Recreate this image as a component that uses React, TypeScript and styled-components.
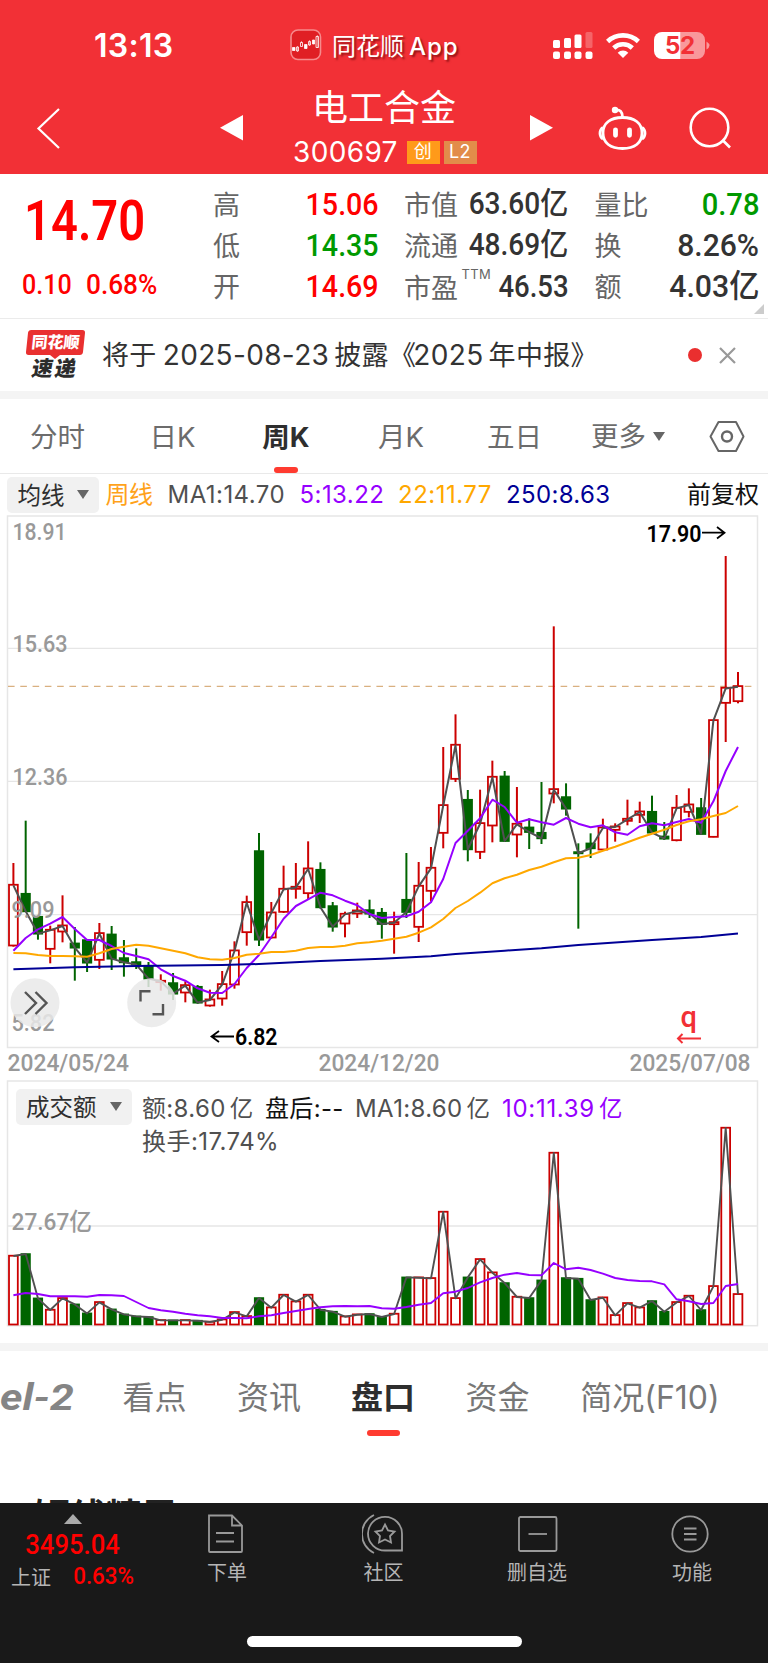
import React from "react";
import styled, { createGlobalStyle } from "styled-components";

const RED = "#f23036";
const UP = "#cc0000";
const DOWN = "#006400";

const Global = createGlobalStyle`
  * { box-sizing: border-box; }
  body { margin: 0; background: #fff; font-family: Inter, "Noto Sans CJK SC", sans-serif; color: #333; }
`;

const Page = styled.div`
  width: 768px; height: 1663px; overflow: hidden; display: flex; flex-direction: column; background: #fff;
`;

/* Condensed figures used for prices */
const Num = styled.span<{ $size?: number; $color?: string; $origin?: string; $x?: number; $w?: number; $drop?: number }>`
  display: inline-block; white-space: nowrap;
  font-family: Roboto, "Noto Sans CJK SC", sans-serif;
  font-weight: ${(p) => p.$w ?? 500};
  font-size: ${(p) => p.$size ?? 32}px; line-height: 1;
  color: ${(p) => p.$color ?? "#333"};
  padding-top: ${(p) => p.$drop ?? 0}px;
  transform: scaleX(${(p) => p.$x ?? 0.86});
  transform-origin: ${(p) => p.$origin ?? "right"} center;
`;

const Header = styled.header`
  height: 174px; flex: none; background: ${RED}; color: #fff; display: flex; flex-direction: column;
`;
const StatusBar = styled.div`
  height: 84px; padding: 6px 56px 0 94px; display: flex; align-items: center;
`;
const Clock = styled.div`font-size: 32px; font-weight: 600; letter-spacing: 0.3px; width: 196px; flex: none; padding-top: 1px;`;
const AppName = styled.div`
  font-size: 24px; margin-left: 10px; width: 220px; flex: none; white-space: nowrap; margin-top: -1px;
  text-shadow: 2px 2px 2px rgba(90, 0, 0, 0.6);
  span { margin-left: 5px; font-weight: 500; letter-spacing: 1px; }
`;
const NavBar = styled.div`height: 90px; display: grid; grid-template-columns: 200px 90px 194px 93px 77px 114px;`;
const Cell = styled.div`display: flex; svg { display: block; }`;
const TitleBox = styled.div`display: flex; flex-direction: column; align-items: center;`;
const Title = styled.div`
  font-size: 36px; line-height: 46px; margin-top: 1px; margin-left: -6px; font-weight: 400; white-space: nowrap;
`;
const CodeRow = styled.div`display: flex; align-items: center; align-self: flex-start; padding-left: 3px; height: 29px; margin-top: 6px;`;
const Code = styled.span`font-size: 28px; letter-spacing: 0.35px; width: 113.5px; white-space: nowrap;`;
const Tag = styled.span<{ $bg: string }>`
  width: 33px; height: 23px; margin-right: 4px; margin-top: 1px; background: ${(p) => p.$bg};
  font-size: 18px; line-height: 22px; text-align: center; letter-spacing: 0.5px;
`;

const Quote = styled.section`
  height: 145px; flex: none; border-bottom: 1.5px solid #ebebeb; display: grid;
  grid-template-columns: 213px 165.5px 164.5px 165px; column-gap: 0; position: relative;
`;
const PriceBox = styled.div`display: flex; flex-direction: column; padding-left: 22px;`;
const Price = styled.div`height: 84px; padding: 20px 0 0 1.5px;`;
const Change = styled.div`height: 34px; display: flex; padding-top: 13px;`;
const ChangeItem = styled.div`width: 64px;`;
const Stats = styled.div<{ $shift: number }>`
  display: flex; flex-direction: column; padding-top: 9px; margin: 0 ${(p) => -p.$shift}px 0 ${(p) => p.$shift}px;
`;
const Stat = styled.div`
  height: 41px; display: flex; justify-content: space-between; align-items: center; position: relative; white-space: nowrap;
`;
const StatLabel = styled.span<{ $low: boolean }>`
  font-size: 27px; color: #666; line-height: 38px; padding-top: ${(p) => (p.$low ? 7 : 4)}px;
  sup { font-size: 13px; position: absolute; top: -1px; left: 57.5px; line-height: 20px; letter-spacing: .4px; }
`;
const Corner = styled.i`
  position: absolute; right: 4px; bottom: 4px; border-left: 10px solid transparent; border-bottom: 10px solid #ccc;
`;

const News = styled.section`height: 72px; flex: none; display: flex; align-items: center; padding: 0 32px 0 24px;`;
const NewsLogo = styled.div`width: 62px; height: 50px; flex: none; display: flex; flex-direction: column; align-items: center;`;
const LogoTop = styled.div`
  width: 57px; height: 25px; background: #e93030; border-radius: 3px; transform: skewX(-6deg); color: #fff;
  font-size: 16px; font-weight: 900; line-height: 24px; text-align: center; white-space: nowrap;
`;
const LogoTip = styled.i`border: 5px solid transparent; border-bottom: 0; border-top: 4px solid #e93030;`;
const LogoBottom = styled.div`
  font-size: 21px; line-height: 20px; font-weight: 900; transform: skewX(-10deg); letter-spacing: 2px;
  white-space: nowrap; margin-top: 0; color: #2c2c2c;
`;
const NewsText = styled.div`
  font-size: 27px; letter-spacing: 0.35px; margin-left: 16px; width: 586px; flex: none; white-space: nowrap; margin-top: -4px;
`;
const Latin = styled.span<{ $tight?: boolean }>`
  font-size: 28px; letter-spacing: 0.35px; margin: 0 5px 0 ${(p) => (p.$tight ? -3 : 6)}px;
`;
const Dot = styled.i`width: 14px; height: 14px; border-radius: 50%; background: #ea2f2f; margin-right: 16.5px; flex: none;`;

const Gap = styled.div`height: 8px; flex: none; background: #f4f4f4;`;

const Tabs = styled.nav`
  height: 75px; flex: none; border-bottom: 1.5px solid #e9e9e9; display: grid; color: #6c6c6c; font-size: 27.5px;
  grid-template-columns: 115px 115px 112px 118px 109px 121px 78px;
`;
const Tab = styled.div<{ $on?: boolean }>`
  display: flex; flex-direction: column; align-items: center; white-space: nowrap; line-height: 76px; height: 75px;
  font-weight: ${(p) => (p.$on ? 700 : 400)}; color: ${(p) => (p.$on ? "#2e2e2e" : "inherit")};
`;
const Underline = styled.i<{ $w: number }>`
  width: ${(p) => p.$w}px; height: 6px; flex: none; border-radius: 3px; background: #ff3b30; margin-top: -8px;
`;
const MoreTab = styled.div`display: flex; align-items: center; line-height: 74px; height: 74px; padding-left: 22px; gap: 7px;`;
const Caret = styled.i`
  border-left: 6.5px solid transparent; border-right: 6.5px solid transparent; border-top: 9px solid #666;
`;

const Legend = styled.div`
  height: 41px; flex: none; display: flex; align-items: center; padding-left: 7px; font-size: 24px; white-space: nowrap;
`;
const Pill = styled.div<{ $w: number }>`
  width: ${(p) => p.$w}px; height: 36px; border-radius: 5px; background: #f1f1f1; flex: none; color: #2f2f2f;
  display: flex; align-items: center; justify-content: space-between; padding: 0 10px 1px 10.5px; font-size: 23.5px;
`;
const Entry = styled.span<{ $c: string; $w?: number; $ls?: number; $start?: number }>`
  color: ${(p) => p.$c}; width: ${(p) => p.$w ?? 100}px; flex: none; letter-spacing: ${(p) => p.$ls ?? 0.35}px; line-height: 33px;
  margin-left: ${(p) => p.$start ?? 0}px;
  small { font-size: 23.5px; margin-left: 4px; }
`;

const Chart = styled.svg`display: block; flex: none;`;
const VolumePanel = styled.section`position: relative; height: 268px; flex: none;`;
const VolumeLegend = styled.div`
  position: absolute; left: 15.5px; top: 13.5px; display: flex; align-items: flex-start; font-size: 24px;
`;
const Entries = styled.div`display: flex; flex-wrap: wrap; width: 600px; padding: 3.5px 0 0 10.5px; white-space: nowrap;`;

const InfoTabs = styled.nav`
  height: 114px; flex: none; display: grid; font-size: 32px; color: #777; padding-top: 8px;
  grid-template-columns: 97px 115px 114px 114px 115px 190px;
`;
const InfoTab = styled.div<{ $on?: boolean }>`
  display: flex; flex-direction: column; align-items: center; line-height: 78px; height: 78px; white-space: nowrap;
  font-weight: ${(p) => (p.$on ? 700 : 400)}; color: ${(p) => (p.$on ? "#2e2e2e" : "inherit")};
`;
const InfoLine = styled(Underline)`margin-top: -7.5px;`;
const LevelTab = styled.div`
  font-family: Roboto, sans-serif; font-weight: 700; font-style: italic; font-size: 37px; line-height: 78px;
  color: #858585; white-space: nowrap; transform: scaleX(1.16); transform-origin: left center;
`;
const Section = styled.section`height: 38px; flex: none; overflow: hidden; padding: 33px 34px 0;`;
const SectionTitle = styled.div`font-size: 36px; font-weight: 700; line-height: 38px; color: #222;`;

const BottomBar = styled.footer`
  height: 160px; flex: none; background: #191919; color: #b5b5b5; display: flex; flex-direction: column; font-size: 20px;
`;
const Actions = styled.div`height: 132px; display: grid; grid-template-columns: 149px 156px 157px 150px 160px;`;
const Index = styled.div`display: flex; flex-direction: column; align-items: center; padding: 11px 4px 0 0;`;
const UpMark = styled.i`
  border-left: 9px solid transparent; border-right: 9px solid transparent; border-bottom: 10px solid #aaa; margin-bottom: 7px;
`;
const IndexRow = styled.div`display: flex; align-items: center; height: 30px; margin-top: 2px; width: 123px; justify-content: space-between;`;
const Action = styled.div`
  display: flex; flex-direction: column; align-items: center; line-height: 30px; padding-top: 9px; white-space: nowrap;
  svg { display: block; margin-bottom: 2px; }
`;
const HomeLine = styled.i`width: 275px; height: 11px; border-radius: 6px; background: #fff; align-self: center; margin-top: 1px;`;

/* [direction, high, bodyTop, bodyBottom, low] in chart pixels */
type Candle = [1 | 0, number, number, number, number];
const shift = (base: number, rows: Candle[]): Candle[] =>
  rows.map(([d, ...v]) => [d, ...v.map((n) => base + n / 3)] as Candle);
const candles: Candle[] = [
  ...shift(780, [
    [1, 249, 314, 498, 500], [0, 122, 340, 396, 396], [0, 409, 409, 463, 479], [1, 437, 449, 508, 550],
    [1, 346, 436, 456, 487], [0, 441, 489, 505, 602], [0, 479, 479, 550, 576], [1, 429, 459, 541, 567],
    [0, 438, 462, 538, 570], [0, 480, 533, 549, 590], [0, 505, 545, 556, 567], [0, 546, 556, 598, 621],
    [1, 583, 602, 608, 632], [0, 579, 608, 643, 660], [1, 604, 615, 639, 667], [0, 615, 619, 670, 671],
    [1, 629, 658, 678, 680], [1, 573, 612, 657, 677], [1, 484, 511, 615, 626], [1, 347, 366, 458, 497],
  ]),
  ...shift(690, [
    [0, 429, 482, 751, 768], [1, 636, 667, 744, 746], [1, 527, 596, 667, 669], [1, 519, 590, 598, 626],
    [1, 454, 535, 611, 628], [0, 517, 538, 654, 656], [0, 636, 647, 712, 725], [1, 665, 671, 702, 742],
    [1, 638, 661, 672, 684], [0, 629, 659, 673, 684], [0, 654, 667, 704, 746], [1, 665, 696, 704, 791],
    [0, 489, 628, 668, 684], [1, 516, 587, 712, 756], [1, 471, 533, 604, 635], [1, 171, 345, 430, 475],
    [1, 73, 164, 268, 276], [0, 300, 328, 480, 514], [1, 299, 399, 487, 507], [1, 212, 260, 408, 457],
    [0, 243, 258, 455, 456],
  ]),
  ...shift(640, [
    [1, 441, 551, 585, 652], [0, 535, 561, 578, 627], [0, 426, 577, 597, 612], [1, -41, 447, 462, 490],
    [0, 430, 470, 508, 527], [0, 610, 635, 642, 866], [0, 580, 609, 627, 654], [1, 536, 562, 630, 633],
    [1, 550, 559, 571, 605], [1, 479, 536, 544, 556], [1, 485, 514, 526, 549], [0, 467, 514, 580, 582],
    [0, 546, 588, 598, 600], [1, 465, 503, 602, 604], [1, 445, 493, 517, 532], [0, 474, 503, 584, 585],
    [1, 240, 240, 592, 592], [1, -252, 143, 190, 306], [1, 96, 138, 185, 190],
  ]),
];
const at = (base: number, v: number[]) => v.map((n) => base + n / 3);
const ma5 = [
  ...at(780, [512, 474, 448, 431, 411, 447, 480, 480, 498, 519, 528, 538, 568, 588, 602, 625, 638, 639, 612, 564]),
  ...at(690, [795, 742, 686, 648, 628, 608, 616, 632, 646, 672, 684, 681, 679, 665, 637, 567, 459, 422, 385, 329, 351]),
  ...at(640, [548, 538, 547, 554, 534, 551, 562, 556, 577, 584, 559, 550, 556, 546, 537, 548, 484, 393, 321]),
];
const ma22 = [
  ...at(780, [519, 520, 525, 528, 528, 529, 530, 520, 507, 500, 494, 497, 505, 512, 520, 532, 538, 539, 534, 524]),
  ...at(690, [791, 786, 786, 782, 774, 771, 771, 767, 760, 757, 752, 746, 740, 728, 712, 687, 654, 633, 608, 580, 565]),
  ...at(640, [704, 690, 680, 667, 655, 653, 645, 632, 620, 607, 593, 581, 569, 555, 544, 538, 528, 519, 498]),
];
const ma250: [number, number][] = [
  [0, 969.3], [5, 967.3], [10, 966], [17, 965], [20, 964], [25, 961], [30, 958.7], [34, 956.3], [36, 954],
  [40, 950.7], [43, 948.3], [46, 945], [52, 940], [56, 937], [59, 933.4],
];
const volTops = at(1075, [
  541, 535, 668, 703, 668, 686, 713, 680, 701, 716, 722, 724, 734, 734, 734, 735, 739, 732, 710, 722, 667, 696, 658,
  678, 658, 702, 708, 723, 717, 715, 724, 715, 605, 606, 608, 409, 668, 605, 551, 591, 622, 664, 667, 614, 232, 607,
  609, 673, 666, 719, 683, 696, 676, 708, 680, 661, 703, 632, 157, 656,
]);
const volMa = at(1075, [
  661, 654, 657, 664, 664, 664, 665, 660, 661, 663, 681, 699, 706, 710, 716, 721, 724, 729, 729, 730, 724, 721, 714,
  708, 702, 697, 694, 693, 694, 693, 700, 701, 696, 689, 684, 655, 650, 639, 622, 609, 599, 594, 600, 601, 564, 583,
  578, 585, 596, 609, 615, 618, 619, 628, 673, 679, 687, 684, 633, 627,
]);
const X = (i: number) => 13.4 + 12.281 * i;
const line = (v: number[]) => v.map((y, i) => `${X(i).toFixed(1)},${y.toFixed(1)}`).join(" ");

const Axis = ({ x, y, w, children, fill = "#999", weight = 500, size = 24 }: {
  x: number; y: number; w: number; children: string; fill?: string; weight?: number; size?: number;
}) => (
  <text x={x} y={y} textLength={w} lengthAdjust="spacingAndGlyphs" fill={fill} fontSize={size} fontWeight={weight}
    fontFamily='Roboto, "Noto Sans CJK SC", sans-serif'>{children}</text>
);

const Bar = ({ x, top, bottom, up }: { x: number; top: number; bottom: number; up: boolean }) =>
  up ? (
    <rect x={x - 4.4} y={top + 0.1} width={8.8} height={Math.max(bottom - top - 0.6, 1)} fill="#fff" stroke={UP} strokeWidth={1.8} />
  ) : (
    <rect x={x - 5.1} y={top - 0.4} width={10.2} height={bottom - top + 0.6} fill={DOWN} />
  );

const PriceChart = () => (
  <Chart width="768" height="560" viewBox="0 515 768 560">
    <g stroke="#e6e6e6" fill="none">
      <rect x="7.5" y="516" width="750" height="531.5" strokeWidth="1.5" />
      <path d="M8 648.4H757M8 781.4H757M8 914.6H757" strokeWidth="1.2" />
    </g>
    <path d="M8 686.4H757" stroke="#d9b080" strokeWidth="1.2" strokeDasharray="6.6 5.68" />
    {candles.map(([d, hi, top, bottom, lo], i) => (
      <g key={i}>
        <path d={`M${X(i)} ${hi}V${lo}`} stroke={d ? UP : DOWN} strokeWidth="2" />
        <Bar x={X(i)} top={top} bottom={bottom} up={!!d} />
      </g>
    ))}
    <g fill="none" strokeWidth="2" strokeLinejoin="round">
      <polyline points={line(candles.map((c) => (c[0] ? c[2] + 0.7 : c[3] - 0.7)))} stroke="#505050" />
      <polyline points={line(ma5)} stroke="#9600ff" />
      <polyline points={line(ma22)} stroke="#ffa800" />
      <polyline points={ma250.map(([i, y]) => `${X(i)},${y}`).join(" ")} stroke="#000096" />
    </g>
    <Axis x={12.5} y={539.5} w={54}>18.91</Axis>
    <Axis x={12.5} y={652} w={55}>15.63</Axis>
    <Axis x={12.5} y={785} w={55}>12.36</Axis>
    <Axis x={11.5} y={918} w={43}>9.09</Axis>
    <Axis x={11.5} y={1031} w={43}>5.82</Axis>
    <Axis x={646.5} y={541.5} w={55} fill="#000" weight={600}>17.90</Axis>
    <Axis x={235} y={1045} w={42.5} fill="#000" weight={600}>6.82</Axis>
    <g fill="none" stroke="#000" strokeWidth="1.8">
      <path d="M702 532.7H724M717 527L724.5 532.7L717 538.5" />
      <path d="M234 1036.5H212M219 1031L211.5 1036.5L219 1042" />
    </g>
    <text x="680.5" y="1026.5" fontSize="29" fontFamily="Roboto" fontWeight="500" fill={RED}>q</text>
    <path d="M701 1038.6H678M682.5 1034L678 1038.6L682.5 1043" fill="none" stroke={RED} strokeWidth="2" />
    <g fill="#e9e9e9" fillOpacity="0.85">
      <circle cx="35" cy="1002.7" r="24.5" />
      <circle cx="151.7" cy="1002.7" r="24.5" />
    </g>
    <g fill="none" stroke="#555" strokeWidth="2.4">
      <path d="M25 992L36 1003L25 1014M35.5 992L46.5 1003L35.5 1014" />
      <path d="M140.5 1001.5V991.3H150.5M163 1004V1014.3H152.5" />
    </g>
    <Axis x={7.5} y={1070.5} w={121.5}>2024/05/24</Axis>
    <Axis x={318.5} y={1070.5} w={121}>2024/12/20</Axis>
    <Axis x={629.5} y={1070.5} w={121}>2025/07/08</Axis>
  </Chart>
);

const VolumeChart = () => (
  <Chart width="768" height="268" viewBox="0 1075 768 268">
    <g stroke="#e6e6e6" fill="none">
      <rect x="7.5" y="1081" width="750" height="244.7" strokeWidth="1.5" />
      <path d="M8 1226H757" strokeWidth="1.3" />
    </g>
    {volTops.map((y, i) => <Bar key={i} x={X(i)} top={y + 0.3} bottom={1325} up={!!candles[i][0]} />)}
    <g fill="none" strokeWidth="1.9" strokeLinejoin="round">
      <polyline points={line(volTops.map((y) => y + 0.7))} stroke="#505050" />
      <polyline points={line(volMa)} stroke="#9600ff" />
    </g>
    <Axis x={11.5} y={1229.5} w={80.5}>27.67亿</Axis>
  </Chart>
);

const AppIcon = () => (
  <svg width="32" height="32" viewBox="0 0 32 32">
    <rect x="1" y="1" width="29.5" height="29.5" rx="7" fill="#e01f24" stroke="#f68a8c" strokeWidth="1.6" />
    <g fill="#fff" stroke="#fff" strokeWidth=".8">
      <path d="M2.5 18.5h2.5v3h-2.5zM14.5 15.5h2.5v4h-2.5zM22.5 11h2v4h-2z" />
      <path d="M6.5 18h2v4h-2zM10.5 13.5h2v4h-2zM18.5 12.5h2v3.5h-2zM26 7.5h2.5v11h-2.5z" fill="none" />
      <path d="M7.5 17v6M11.5 12v2M19.5 11v6M27.3 6v13" strokeWidth=".5" />
    </g>
  </svg>
);

const StatusIcons = () => (
  <svg width="160" height="34" viewBox="0 0 160 34">
    <g fill="#fff">
      <rect x="1" y="12" width="7" height="8" rx="1.5" /><rect x="12" y="10" width="7" height="10" rx="1.5" />
      <rect x="22.5" y="6.5" width="7" height="13.5" rx="1.5" />
      <rect x="33.5" y="4" width="7" height="16" rx="1.5" opacity=".25" />
      <rect x="1" y="23.5" width="7" height="7.5" rx="2" /><rect x="12" y="23.5" width="7" height="7.5" rx="2" />
      <rect x="22.5" y="23.5" width="7" height="7.5" rx="2" /><rect x="33.5" y="23.5" width="7" height="7.5" rx="2" />
    </g>
    <g transform="translate(71 29)" fill="none" stroke="#fff" strokeWidth="4.6">
      <path d="M-15.4 -15.5A22.5 22.5 0 0 1 15.4 -15.5" />
      <path d="M-9.3 -9A13.5 13.5 0 0 1 9.3 -9" />
      <path d="M0 1L-5.3 -4.3A7.5 7.5 0 0 1 5.3 -4.3Z" fill="#fff" stroke="none" />
    </g>
    <path d="M110 4h18.500v27H110a8 8 0 0 1-8-8v-11a8 8 0 0 1 8-8z" fill="#fff" />
    <path d="M128.500 4h16.500a8 8 0 0 1 8 8v11a8 8 0 0 1-8 8h-16.500zM154.500 13.500q6 4 0 8z" fill="#fff" opacity=".5" />
    <text x="113" y="26" fontFamily="Inter" fontSize="24" fontWeight="700" fill={RED}>5</text>
    <text x="128" y="26" fontFamily="Inter" fontSize="24" fontWeight="700" fill={RED}>2</text>
  </svg>
);

const Robot = () => (
  <svg width="77" height="90" viewBox="577 84 77 90" fill="none" stroke="#fff" strokeWidth="2.8">
    <path d="M622.500 117.500c12 0 19.500 5.500 19.500 15.500s-7.500 15.500-19.500 15.500s-19.500-5.500-19.500-15.500s7.500-15.500 19.500-15.500z" />
    <path d="M603 127.500c-4 2.500-4 9 0 11.500M642 127.500c4 2.500 4 9 0 11.500" />
    <path d="M615 110c5-1 7.500 2 7.500 7" />
    <circle cx="615" cy="110" r="3.2" fill="#fff" stroke="none" />
    <path d="M615.500 129.800v5.500M629.500 129.800v5.500" strokeWidth="4.8" strokeLinecap="round" />
  </svg>
);

type StatRow = { label: string; value: string; color?: string; x: number; size?: number; drop?: number };
const stats: StatRow[][] = [
  [
    { label: "高", value: "15.06", color: "#f00", x: 0.895 },
    { label: "低", value: "14.35", color: "#090", x: 0.895 },
    { label: "开", value: "14.69", color: "#f00", x: 0.895 },
  ],
  [
    { label: "市值", value: "63.60亿", x: 0.92, size: 30.5, drop: 2 },
    { label: "流通", value: "48.69亿", x: 0.92, size: 30.5, drop: 2 },
    { label: "市盈", value: "46.53", x: 0.86 },
  ],
  [
    { label: "量比", value: "0.78", color: "#090", x: 0.91 },
    { label: "换", value: "8.26%", x: 0.94 },
    { label: "额", value: "4.03亿", x: 0.945 },
  ],
];
const columnShift = [0, 25.5, 51.5];

export default function App() {
  return (
    <Page>
      <Global />
      <Header>
        <StatusBar>
          <Clock>13:13</Clock>
          <AppIcon />
          <AppName>同花顺<span>App</span></AppName>
          <StatusIcons />
        </StatusBar>
        <NavBar>
          <Cell>
            <svg width="90" height="90" viewBox="0 84 90 90" fill="none" stroke="#fff" strokeWidth="2.2">
              <path d="M59 109L38.500 128.500L59 148" />
            </svg>
          </Cell>
          <Cell><svg width="90" height="90" viewBox="200 84 90 90"><path d="M220 127.800L243 115V140.600z" fill="#fff" /></svg></Cell>
          <TitleBox>
            <Title>电工合金</Title>
            <CodeRow><Code>300697</Code><Tag $bg="#ff9a1a">创</Tag><Tag $bg="#e28c4a">L2</Tag></CodeRow>
          </TitleBox>
          <Cell><svg width="80" height="90" viewBox="484 84 80 90"><path d="M553 127.800L530 115V140.600z" fill="#fff" /></svg></Cell>
          <Cell><Robot /></Cell>
          <Cell>
            <svg width="110" height="90" viewBox="654 84 110 90" fill="none" stroke="#fff" strokeWidth="2.6">
              <circle cx="709.500" cy="127.500" r="18.800" /><path d="M722.500 140L730 147.500" />
            </svg>
          </Cell>
        </NavBar>
      </Header>

      <Quote>
        <PriceBox>
          <Price><Num $size={55.5} $color="#f00" $origin="left" $w={600} $x={0.85}>14.70</Num></Price>
          <Change>
            <ChangeItem><Num $size={28.5} $color="#f00" $origin="left" $x={0.88}>0.10</Num></ChangeItem>
            <ChangeItem><Num $size={28.5} $color="#f00" $origin="left" $x={0.92}>0.68%</Num></ChangeItem>
          </Change>
        </PriceBox>
        {stats.map((col, c) => (
          <Stats key={c} $shift={columnShift[c]}>
            {col.map((s) => (
              <Stat key={s.label}>
                <StatLabel $low={s.label === "市盈"}>{s.label}{s.label === "市盈" && <sup>TTM</sup>}</StatLabel>
                <Num $color={s.color} $x={s.x} $size={s.size} $drop={s.drop}>{s.value}</Num>
              </Stat>
            ))}
          </Stats>
        ))}
        <Corner />
      </Quote>

      <News>
        <NewsLogo><LogoTop>同花顺</LogoTop><LogoTip /><LogoBottom>速递</LogoBottom></NewsLogo>
        <NewsText>将于<Latin>2025-08-23</Latin>披露《<Latin $tight>2025</Latin>年中报》</NewsText>
        <Dot />
        <svg width="17" height="17" viewBox="0 0 17 17" stroke="#999" strokeWidth="2.2"><path d="M1 1L16 16M16 1L1 16" /></svg>
      </News>
      <Gap />

      <Tabs>
        <Tab>分时</Tab>
        <Tab>日K</Tab>
        <Tab $on>周K<Underline $w={24} /></Tab>
        <Tab>月K</Tab>
        <Tab>五日</Tab>
        <MoreTab>更多<Caret /></MoreTab>
        <Cell>
          <svg width="78" height="74" viewBox="690 399 78 74" fill="none" stroke="#666" strokeWidth="2">
            <path d="M718.500 422H736L743.500 436.500L736 451H718.500L710.500 436.500z" strokeLinejoin="round" />
            <circle cx="727" cy="436.500" r="5" strokeWidth="2.4" />
          </svg>
        </Cell>
      </Tabs>

      <Legend>
        <Pill $w={91.5}>均线<Caret /></Pill>
        <Entry $c="#ffa21a" $w={62} $start={7} $ls={-0.5}>周线</Entry>
        <Entry $c="#505050" $w={132} $ls={0.45}>MA1:14.70</Entry>
        <Entry $c="#9600ff" $w={98.5} $ls={0.45}>5:13.22</Entry>
        <Entry $c="#ffa800" $w={108} $ls={0.5}>22:11.77</Entry>
        <Entry $c="#000096" $w={181} $ls={0.35}>250:8.63</Entry>
        <Entry $c="#111" $w={76} $ls={0}>前复权</Entry>
      </Legend>

      <PriceChart />

      <VolumePanel>
        <VolumeChart />
        <VolumeLegend>
          <Pill $w={116}>成交额<Caret /></Pill>
          <Entries>
            <Entry $c="#505050" $w={123}>额:8.60<small>亿</small></Entry>
            <Entry $c="#111" $w={90}>盘后:--</Entry>
            <Entry $c="#505050" $w={147}>MA1:8.60<small>亿</small></Entry>
            <Entry $c="#9600ff" $w={130} $ls={0.7}>10:11.39<small>亿</small></Entry>
            <Entry $c="#505050" $w={200} $ls={0.45}>换手:17.74%</Entry>
          </Entries>
        </VolumeLegend>
      </VolumePanel>
      <Gap />

      <InfoTabs>
        <LevelTab>el-2</LevelTab>
        <InfoTab>看点</InfoTab>
        <InfoTab>资讯</InfoTab>
        <InfoTab $on>盘口<InfoLine $w={33} /></InfoTab>
        <InfoTab>资金</InfoTab>
        <InfoTab>简况(F10)</InfoTab>
      </InfoTabs>
      <Section><SectionTitle>短线精灵</SectionTitle></Section>

      <BottomBar>
        <Actions>
          <Index>
            <UpMark />
            <Num $size={28.5} $color="#f00" $origin="center" $x={0.9}>3495.04</Num>
            <IndexRow>上证<Num $size={23.5} $color="#f00" $x={0.95}>0.63%</Num></IndexRow>
          </Index>
          <Action>
            <svg width="44" height="44" viewBox="0 0 44 44" fill="none" stroke="#999" strokeWidth="1.8">
              <path d="M4 3.500H27L37 13.500V39q0 1-1 1H5q-1 0-1-1zM27 3.500V13.500H37M11 21H29M11 29.500H29" />
            </svg>
            下单
          </Action>
          <Action>
            <svg width="44" height="44" viewBox="0 0 44 44" fill="none" stroke="#999" strokeWidth="1.8">
              <path d="M40 38.500H23A17 16.800 0 1 1 40 22zM12 3A21 21 0 0 0 12 41" />
              <path d="M23 12.500L26 18.500L32.500 19.500L28 24L29 30.500L23 27.500L17 30.500L18 24L13.500 19.500L20 18.500z" />
            </svg>
            社区
          </Action>
          <Action>
            <svg width="44" height="44" viewBox="0 0 44 44" fill="none" stroke="#999" strokeWidth="1.8">
              <rect x="4" y="5" width="37.500" height="34" rx="1.500" /><path d="M13.500 22H32" />
            </svg>
            删自选
          </Action>
          <Action>
            <svg width="44" height="44" viewBox="0 0 44 44" fill="none" stroke="#999" strokeWidth="1.8">
              <circle cx="20" cy="22" r="17.700" /><path d="M14 16.500H26.500M14 22H26.500M14 27.500H26.500" />
            </svg>
            功能
          </Action>
        </Actions>
        <HomeLine />
      </BottomBar>
    </Page>
  );
}
